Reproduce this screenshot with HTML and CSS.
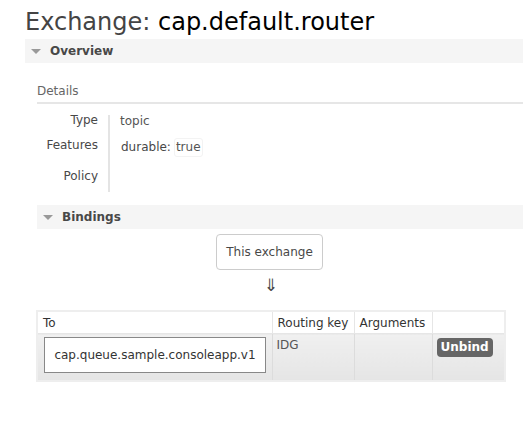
FILE: index.html
```html
<!DOCTYPE html>
<html>
<head>
<meta charset="utf-8">
<link rel="stylesheet" href="styles.css">
</head>
<body>
<h1 class="title">Exchange: <b>cap.default.router</b></h1>
<div class="section">
  <div class="section-head"><span class="tri"></span>Overview</div>
  <div class="section-body">
    <h3 class="sub">Details</h3>
    <div class="facts">
      <div class="labels">
        <div class="lab lab-type">Type</div>
        <div class="lab lab-feat">Features</div>
        <div class="lab lab-pol">Policy</div>
      </div>
      <div class="vals">
        <div class="val val-type">topic</div>
        <div class="val val-feat"><span class="key">durable:</span> <span class="tag">true</span></div>
        <div class="val val-pol"></div>
      </div>
    </div>
  </div>
</div>
<div class="section inner">
  <div class="section-head"><span class="tri"></span>Bindings</div>
  <div class="bind-body">
    <div class="this-ex">This exchange</div>
    <div class="arrow">&#8659;</div>
    <table class="bindings">
      <colgroup><col class="w-to"><col class="w-rk"><col class="w-args"><col class="w-act"></colgroup>
      <thead>
        <tr><th>To</th><th>Routing key</th><th>Arguments</th><th></th></tr>
      </thead>
      <tbody>
        <tr>
          <td class="c-to"><div class="qbox">cap.queue.sample.consoleapp.v1</div></td>
          <td class="c-rk">IDG</td>
          <td class="c-args"></td>
          <td class="c-act"><span class="btn">Unbind</span></td>
        </tr>
      </tbody>
    </table>
  </div>
</div>
</body>
</html>
```
FILE: styles.css
```css
html, body { margin: 0; padding: 0; background: #fff; }
body {
  font-family: "DejaVu Sans", Verdana, sans-serif;
  font-size: 12px;
  color: #484848;
  overflow: hidden;
  width: 523px;
}
.title {
  margin: 0;
  padding: 7px 0 0 25px;
  height: 32px;
  font-size: 24px;
  font-weight: normal;
  color: #444;
  line-height: 30px;
  white-space: nowrap;
}
.title b { font-weight: normal; color: #000; }
.section { margin-left: 25px; }
.section.inner { margin-left: 37px; margin-top: 13px; }
.section-head {
  height: 24px;
  line-height: 24px;
  background: #f5f5f5;
  font-weight: bold;
  font-size: 12px;
  color: #484848;
  display: flex;
  align-items: center;
}
.tri {
  width: 0; height: 0;
  border-left: 5px solid transparent;
  border-right: 5px solid transparent;
  border-top: 5px solid #999;
  margin: 1px 9px 0 6px;
}
.section-body { padding-left: 12px; padding-top: 19px; }
.sub {
  margin: 0;
  font-size: 12px;
  font-weight: normal;
  color: #666;
  line-height: 18px;
  padding-bottom: 2px;
  border-bottom: 2px solid #e6e6e6;
}
.facts { display: flex; margin-top: 11px; }
.labels { width: 61px; text-align: right; margin-top: -3px; }
.lab { line-height: 16px; color: #484848; }
.lab-type { margin-top: 0; }
.lab-feat { margin-top: 9px; }
.lab-pol { margin-top: 15px; }
.vals {
  margin-left: 10px;
  border-left: 2px solid #e4e4e4;
  padding-left: 10px;
  height: 77px;
}
.val { line-height: 16px; color: #555; }
.val-type { margin-top: -2px; }
.val-feat { margin-top: 8px; display: flex; align-items: center; padding-left: 1px; }
.key { color: #484848; }
.tag {
  margin-left: 3px;
  margin-top: 1px;
  padding: 0 1px 1px;
  border: 1px solid #f3f3f3;
  border-radius: 3px;
  color: #555;
}
.bind-body { width: 468px; display: flex; flex-direction: column; align-items: center; }
.this-ex {
  margin-top: 5px;
  width: 105px;
  height: 34px;
  line-height: 34px;
  text-align: center;
  border: 1px solid #ccc;
  border-radius: 4px;
  color: #484848;
  margin-right: 3px;
}
.arrow { font-size: 17px; line-height: 18px; margin-top: 6px; color: #484848; }
.bindings {
  margin-top: 16px;
  width: 468px;
  table-layout: fixed;
  border-collapse: collapse;
  border: 2px solid #eee;
}
.w-to { width: 235px; }
.w-rk { width: 82px; }
.w-args { width: 78px; }
.w-act { width: 73px; }
.bindings th {
  text-align: left;
  font-weight: normal;
  height: 21px;
  padding: 0 5px;
  border: 1px solid #e6e6e6;
  color: #333;
  background: #fff;
  white-space: nowrap;
}
.bindings td {
  vertical-align: top;
  padding: 0 4px;
  height: 46px;
  border: 1px solid #dcdcdc;
  background: linear-gradient(#f0f0f0, #e5e5e5);
  color: #555;
}
.bindings td.c-rk { padding-top: 4px; height: 42px; }
.qbox {
  margin-top: 3px;
  width: 222px;
  height: 36px;
  line-height: 34px;
  text-align: center;
  border: 1px solid #888;
  background: #fff;
  color: #333;
  box-sizing: border-box;
  white-space: nowrap;
  margin-left: 2px;
}
.bindings td.c-to { padding: 0 4px 0 4px; }
.btn {
  display: inline-block;
  margin-top: 4px;
  background: #666;
  color: #fff;
  font-weight: bold;
  padding: 0 4px;
  line-height: 19px;
  border-radius: 4px;
}
```
